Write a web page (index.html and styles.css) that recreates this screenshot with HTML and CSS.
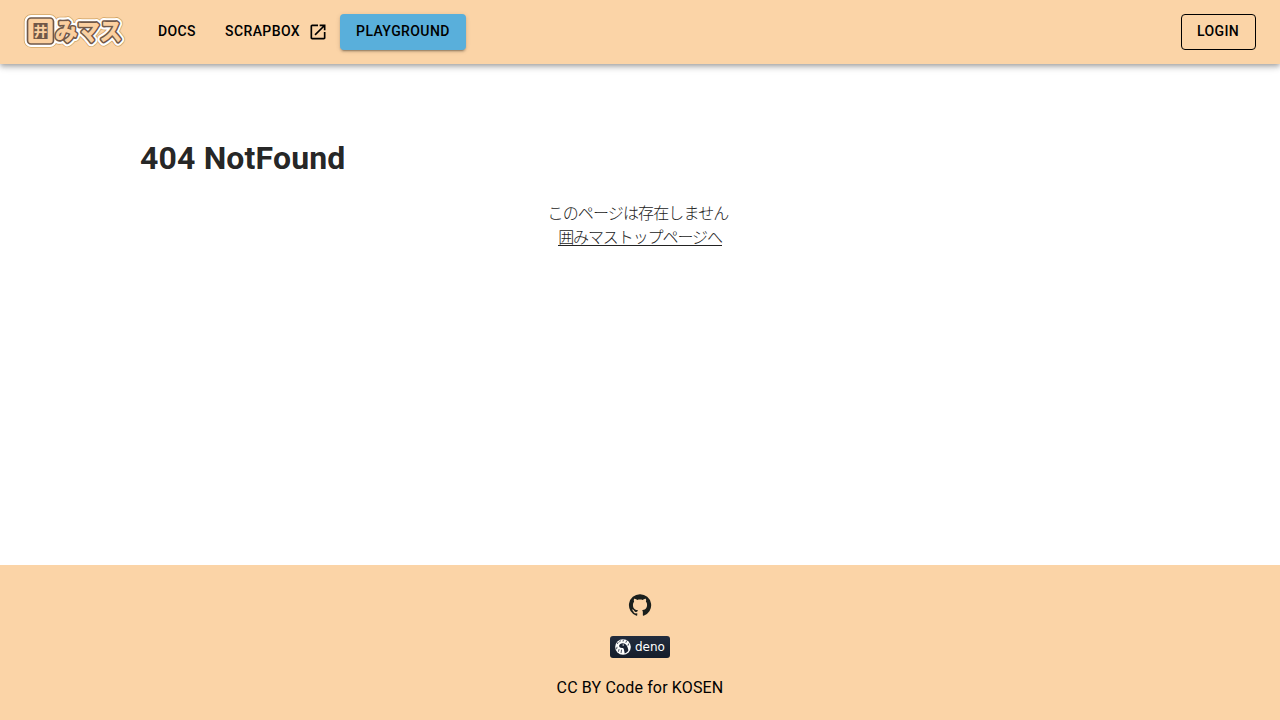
FILE: index.html
```html
<!DOCTYPE html>
<html lang="ja">
<head>
<meta charset="utf-8">
<title>404 NotFound</title>
<link rel="stylesheet" href="styles.css">
</head>
<body>
<header class="appbar">
  <a class="brand">
    <svg class="logo" width="102" height="36" viewBox="0 0 102 36" role="img">
      <g class="layer edge"><rect x="5" y="5.5" width="23" height="23" rx="2"/><text x="31" y="26" textLength="67" lengthAdjust="spacingAndGlyphs">みマス</text></g>
      <g class="layer halo"><rect x="5" y="5.5" width="23" height="23" rx="2"/><text x="31" y="26" textLength="67" lengthAdjust="spacingAndGlyphs">みマス</text></g>
      <g class="layer outline"><rect x="5" y="5.5" width="23" height="23" rx="2"/><text x="31" y="26" textLength="67" lengthAdjust="spacingAndGlyphs">みマス</text></g>
      <g class="layer body"><rect x="5" y="5.5" width="23" height="23" rx="2"/><text x="31" y="26" textLength="67" lengthAdjust="spacingAndGlyphs">みマス</text></g>
      <rect class="cells" x="8" y="8.5" width="17" height="17"/>
      <text class="kanji" x="5.5" y="25.2">囲</text>
    </svg>
  </a>
  <nav class="nav">
    <a class="btn docs">Docs</a>
    <a class="btn scrapbox">Scrapbox
      <svg class="open" viewBox="0 0 24 24"><path d="M19 19H5V5h7V3H5c-1.11 0-2 .9-2 2v14c0 1.1.89 2 2 2h14c1.1 0 2-.9 2-2v-7h-2v7zM14 3v2h3.59l-9.83 9.83 1.41 1.41L19 6.41V10h2V3h-7z"/></svg>
    </a>
    <a class="btn playground">Playground</a>
  </nav>
  <a class="btn login">Login</a>
</header>
<main class="content">
  <h1>404 NotFound</h1>
  <div class="message">
    <div class="line notice">このページは存在しません</div>
    <a class="line home">囲みマストップページへ</a>
  </div>
</main>
<footer class="footer">
  <svg class="github" viewBox="0 0 24 24"><path d="M12 1.27a11 11 0 00-3.48 21.46c.55.09.73-.28.73-.55v-1.84c-3.03.64-3.67-1.46-3.67-1.46-.55-1.29-1.28-1.65-1.28-1.65-.92-.65.1-.65.1-.65 1.1 0 1.73 1.1 1.73 1.1.92 1.65 2.57 1.2 3.21.92a2 2 0 01.64-1.47c-2.47-.27-5.04-1.19-5.04-5.5 0-1.1.46-2.1 1.2-2.84a3.76 3.76 0 010-2.93s.91-.28 3.11 1.1c1.8-.49 3.7-.49 5.5 0 2.1-1.38 3.02-1.1 3.02-1.1a3.76 3.76 0 01.1 2.93c.83.74 1.2 1.74 1.2 2.94 0 4.21-2.57 5.13-5.04 5.4.45.37.82.92.82 2.02v3.03c0 .27.1.64.73.55A11 11 0 0012 1.27"/></svg>
  <div class="badge">
    <svg class="deno" viewBox="0 0 16 16">
      <circle cx="8" cy="8" r="7.8" fill="#fff"/>
      <path d="M7.7 4.3c-2 0-3.6 1.2-3.6 2.7 0 1.3 1.3 2.1 3.2 2 1.1 0 1.4.6 1.6 1.5l.8 4.1c1.6-.5 3-1.6 3.7-3.3-.7-3.8-2.3-7-5.7-7z" fill="#1a2233"/>
      <path d="M3 3.5l-.5 1.2M5.2 1.8l-.4 1M8.3 1.2l-.2 1M11.5 2l-.5 1.4M13.5 5l-.4 1.3M2 8.2l-.4 1.6M4 10.5l-.5 1.8M6.5 11l-.4 2.7" stroke="#1a2233" stroke-width=".8" stroke-linecap="round"/>
      <circle cx="8.2" cy="6" r=".7" fill="#fff"/>
    </svg>
    <span>deno</span>
  </div>
  <div class="license">CC BY Code for KOSEN</div>
</footer>
</body>
</html>
```
FILE: styles.css
```css
* { box-sizing: border-box; }
body {
  margin: 0;
  height: 720px;
  display: flex;
  flex-direction: column;
  font: 400 16px/1.5 Roboto, "Noto Sans CJK JP", sans-serif;
  letter-spacing: 0.00938em;
  color: rgba(0, 0, 0, 0.87);
  background: #fff;
}
.appbar {
  height: 64px;
  flex: none;
  display: flex;
  align-items: center;
  padding: 0 24px;
  background: #fbd4a7;
  box-shadow: 0 2px 4px -1px rgba(0,0,0,.2), 0 4px 5px rgba(0,0,0,.14), 0 1px 10px rgba(0,0,0,.12);
}
.brand { display: flex; width: 102px; }
.logo { font: 500 24px "Noto Sans CJK JP", sans-serif; letter-spacing: 0; overflow: visible; }
.layer { stroke-linejoin: round; }
.edge { fill: #d2a565; stroke: #d2a565; stroke-width: 10.4; }
.halo { fill: #fff; stroke: #fff; stroke-width: 8.8; }
.outline { fill: #705848; stroke: #705848; stroke-width: 4.6; }
.body { fill: #fbd0a0; stroke: #fbd0a0; stroke-width: 1.3; }
.cells { fill: #705848; }
.kanji { font-size: 22px; fill: #fbd0a0; }
.nav { display: flex; margin-left: 24px; }
.btn {
  height: 36px;
  display: flex;
  align-items: center;
  padding: 0 8px 2px;
  border-radius: 4px;
  color: #000;
  font-size: 14px;
  font-weight: 500;
  line-height: 24px;
  letter-spacing: 0.02857em;
  text-transform: uppercase;
}
.scrapbox { margin-left: 13px; }
.open { width: 20px; height: 20px; margin: 2px 0 0 8px; }
.playground {
  margin-left: 4px;
  padding: 0 16px 2px;
  background: #59afdb;
  box-shadow: 0 3px 1px -2px rgba(0,0,0,.2), 0 2px 2px rgba(0,0,0,.14), 0 1px 5px rgba(0,0,0,.12);
}
.login { width: 75px; margin-left: auto; padding: 0 15px 2px; border: 1px solid #000; }
.content { width: 1000px; margin: 0 auto; padding-top: 70px; flex: 1; }
h1 { margin: 0; font-size: 32px; line-height: 48px; font-weight: 700; }
.message { margin-top: 18px; display: flex; flex-direction: column; align-items: center; font-family: "Noto Sans CJK JP", sans-serif; font-weight: 300; color: #222; }
.line { height: 24px; letter-spacing: -0.85px; white-space: nowrap; }
.notice { padding-right: 4px; }
.home { height: 22px; letter-spacing: -1.09px; border-bottom: 1px solid currentColor; }
.footer {
  height: 155px;
  flex: none;
  display: flex;
  flex-direction: column;
  align-items: center;
  padding-top: 28px;
  background: #fbd4a7;
}
.github { width: 24px; height: 24px; fill: #1b1f1c; }
.badge {
  width: 60px;
  height: 22px;
  margin-top: 19px;
  display: flex;
  align-items: center;
  gap: 4px;
  padding: 0 5px;
  border-radius: 3px;
  background: linear-gradient(#222c3d, #151d2b);
  color: #fff;
  font: 12px "DejaVu Sans", sans-serif;
  letter-spacing: 0;
}
.deno { width: 16px; height: 16px; flex: none; }
.license { margin-top: 18px; color: #000; }
```
